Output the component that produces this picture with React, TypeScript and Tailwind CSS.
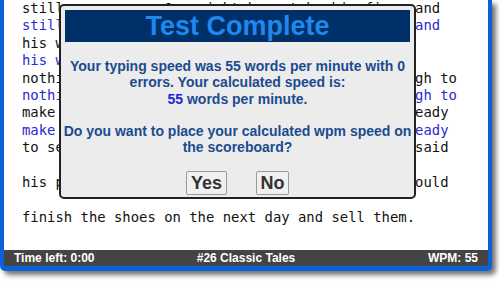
import React from "react";

const lines: { t: string; blue?: boolean }[] = [
  { t: "still very poor. One night he sat by his fire, and" },
  { t: "still very poor. One night he sat by his fire, and", blue: true },
  { t: "his wife were hungry, for he had" },
  { t: "his wife were hungry, for he had", blue: true },
  { t: "nothing left but a small piece of leather, enough to" },
  { t: "nothing left but a small piece of leather, enough to", blue: true },
  { t: "make one pair of shoes. He cut the pieces out ready" },
  { t: "make one pair of shoes. He cut the pieces out ready", blue: true },
  { t: "to sew in the morning. Before going to bed, he said" },
  { t: "" },
  { t: "his prayers and went to sleep, hoping that he could" },
  { t: "" },
  { t: "finish the shoes on the next day and sell them." },
];

export default function App() {
  return (
    <div className="relative w-[500px] h-[289px] bg-white overflow-hidden">
      <div className="w-[492px] border-x-4 border-b-[5px] border-[#0b62d6] rounded-b-[5px] shadow-[4px_4px_5px_rgba(0,0,0,0.55)] bg-white">
        <div
          className="h-[250px] pl-[18px] text-[13.9px] leading-[17.4px] whitespace-pre"
          style={{ fontFamily: '"DejaVu Sans Mono", monospace' }}
        >
          {lines.map((l, i) => (
            <div key={i} className={l.blue ? "text-[#2a2ad2] h-[17.4px]" : "text-[#111] h-[17.4px]"}>
              {l.t}
            </div>
          ))}
        </div>
        <div
          className="h-[16px] bg-[#444] text-white font-bold text-[12px] leading-[16px] flex justify-between items-center px-[10px]"
          style={{ fontFamily: '"Liberation Sans", Arial, sans-serif' }}
        >
          <span className="w-[120px]">Time left: 0:00</span>
          <span>#26 Classic Tales</span>
          <span className="w-[120px] text-right">WPM: 55</span>
        </div>
      </div>

      <div
        className="absolute left-[59px] top-[4px] w-[357px] h-[195px] border-2 border-[#222] rounded-[5px] bg-[#ececec] p-[4px] flex flex-col"
        style={{ fontFamily: '"Liberation Sans", Arial, sans-serif' }}
      >
        <div className="h-[32px] shrink-0 bg-[#003068] flex items-center justify-center text-[27px] font-bold text-[#1e88ee] leading-none">
          Test Complete
        </div>
        <div className="mt-[16px] -mx-[4px] shrink-0 text-center text-[14px] font-bold leading-[16.3px] text-[#1b4b8f] whitespace-nowrap">
          <div>Your typing speed was 55 words per minute with 0</div>
          <div>errors. Your calculated speed is:</div>
          <div>
            <span className="text-[#2222dd]">55</span> words per minute.
          </div>
          <div className="h-[16.3px]"></div>
          <div>Do you want to place your calculated wpm speed on</div>
          <div>the scoreboard?</div>
        </div>
        <div className="mt-[15px] shrink-0 flex justify-center gap-[29px]">
          <button className="h-[24px] w-[41px] border border-[#9a9a9a] rounded-[2px] bg-[#f0f0f0] text-[18px] font-bold text-[#333] leading-none flex items-center justify-center">
            Yes
          </button>
          <button className="h-[24px] w-[33px] border border-[#9a9a9a] rounded-[2px] bg-[#f0f0f0] text-[18px] font-bold text-[#333] leading-none flex items-center justify-center">
            No
          </button>
        </div>
      </div>
    </div>
  );
}
